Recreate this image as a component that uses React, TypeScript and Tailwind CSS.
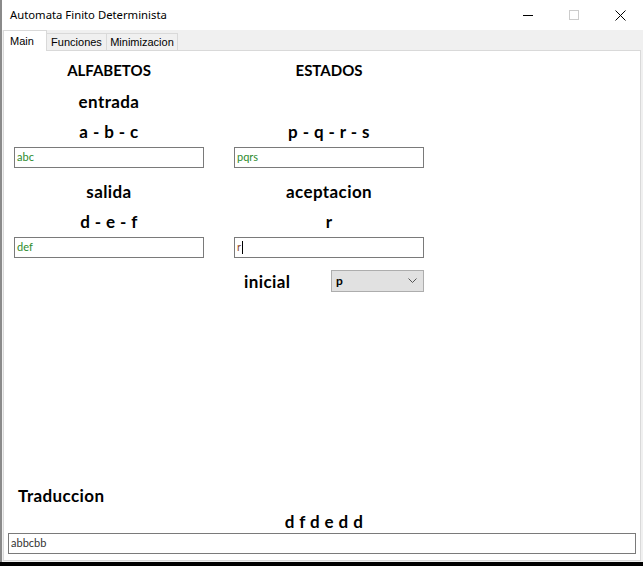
const base = "font-['Lato','DejaVu_Sans',sans-serif] font-bold text-black";
const title = `${base} text-[17px] tracking-[0.4px]`;
const caps = `${base} text-[15px]`;
const inputCls =
  "h-[21px] w-[190px] border border-[#7a7a7a] bg-white px-[2px] text-[11px] font-['Lato','DejaVu_Sans',sans-serif] flex items-center";

function Row({ left, right, h = "h-[31px]", cls = title }: { left?: string; right?: string; h?: string; cls?: string }) {
  return (
    <div className={`flex ${h} items-center`}>
      <div className={`w-[190px] text-center ${cls}`}>{left}</div>
      <div className="w-[30px]" />
      <div className={`w-[190px] text-center ${cls}`}>{right}</div>
    </div>
  );
}

function WinControls() {
  return (
    <div className="flex h-[30px] items-center">
      <div className="flex h-full w-[46px] items-center justify-center">
        <svg width="10" height="10" viewBox="0 0 10 10">
          <path d="M0 5.5h10" stroke="#000" strokeWidth="1" />
        </svg>
      </div>
      <div className="flex h-full w-[46px] items-center justify-center">
        <svg width="10" height="10" viewBox="0 0 10 10">
          <rect x="0.5" y="0.5" width="9" height="9" fill="none" stroke="#cccccc" strokeWidth="1" />
        </svg>
      </div>
      <div className="flex h-full w-[46px] items-center justify-center">
        <svg width="11" height="11" viewBox="0 0 11 11">
          <path d="M0.5 0.5l10 10M10.5 0.5l-10 10" stroke="#000" strokeWidth="1" />
        </svg>
      </div>
    </div>
  );
}

export default function App() {
  return (
    <div className="flex h-[566px] w-[643px] flex-col bg-black">
      <div className="flex h-[562px] flex-col border-l-2 border-[#8a8a8a] bg-[#f0f0f0]">
        {/* title bar */}
        <div className="flex h-[30px] items-center justify-between bg-white pl-[8px]">
          <span className="font-['Noto_Sans','Open_Sans',sans-serif] text-[11.3px] text-black">
            Automata Finito Determinista
          </span>
          <WinControls />
        </div>

        {/* tabs */}
        <div className="flex h-[20px] items-end pl-[1px] font-['Liberation_Sans','Arial',sans-serif] text-[11px] text-black">
          <div className="relative z-10 -mb-px flex h-[21px] w-[44px] items-start border border-b-0 border-[#d9d9d9] bg-white pl-[6px] pt-[2px]">
            Main
          </div>
          <div className="flex h-[17px] w-[60px] items-center justify-center border border-b-0 border-l-0 border-[#d9d9d9] bg-[#f0f0f0]">
            Funciones
          </div>
          <div className="flex h-[17px] w-[71px] items-center justify-center border border-b-0 border-l-0 border-[#d9d9d9] bg-[#f0f0f0]">
            Minimizacion
          </div>
        </div>

        {/* tab page */}
        <div className="ml-[1px] mr-[2px] flex h-[511px] flex-col border border-[#d9d9d9] bg-white">
          <div className="flex flex-col pl-[10px] pt-[4px]">
            <Row left="ALFABETOS" right="ESTADOS" cls={caps} />
            <Row left="entrada" />
            <Row left="a - b - c" right="p - q - r - s" h="h-[30px]" />
            <div className="flex">
              <div className={`${inputCls} text-[#2e8b2e]`}>abc</div>
              <div className="w-[30px]" />
              <div className={`${inputCls} text-[#2e8b2e]`}>pqrs</div>
            </div>
            <div className="h-[9px]" />
            <Row left="salida" right="aceptacion" h="h-[30px]" />
            <Row left="d - e - f" right="r" h="h-[30px]" />
            <div className="flex">
              <div className={`${inputCls} text-[#2e8b2e]`}>def</div>
              <div className="w-[30px]" />
              <div className={`${inputCls} text-[#8b4a2e]`}>
                r<span className="ml-px inline-block h-[13px] w-px bg-black" />
              </div>
            </div>
            <div className="mt-[12px] flex h-[22px] items-center">
              <div className="w-[220px]" />
              <div className={`w-[97px] pl-[10px] pt-[2px] ${title}`}>inicial</div>
              <div className="flex h-[22px] w-[93px] items-center justify-between border border-[#adadad] bg-[#e1e1e1] pl-[4px] pr-[6px]">
                <span className="font-['Lato','DejaVu_Sans',sans-serif] text-[12px] font-bold text-black">p</span>
                <svg width="9" height="6" viewBox="0 0 9 6">
                  <path d="M0.5 0.5l4 4 4-4" fill="none" stroke="#555" strokeWidth="1" />
                </svg>
              </div>
            </div>
          </div>

          <div className="mt-auto flex flex-col px-[4px] pb-[6px]">
            <div className={`flex h-[30px] items-center pl-[10px] ${title}`}>Traduccion</div>
            <div className={`flex h-[22px] items-center justify-center pl-[4px] ${title}`}>
              d f d e d d
            </div>
            <div className="flex h-[21px] items-center border border-[#7a7a7a] px-[2px] font-['Lato','DejaVu_Sans',sans-serif] text-[11px] text-[#333]">
              abbcbb
            </div>
          </div>
        </div>
        <div className="h-px" />
      </div>
    </div>
  );
}
